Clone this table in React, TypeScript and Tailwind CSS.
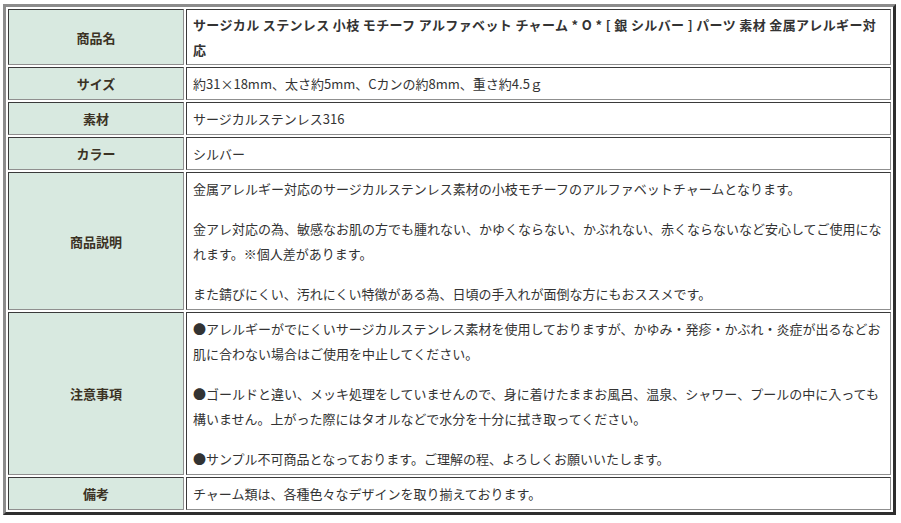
const font = "font-['Noto_Sans_CJK_JP','Noto_Sans',sans-serif]";

interface Row {
  label: string;
  body: string[][];
  bold?: boolean;
}

const rows: Row[] = [
  {
    label: '商品名',
    bold: true,
    body: [
      [
        'サージカル ステンレス 小枝 モチーフ アルファベット チャーム * O * [ 銀 シルバー ] パーツ 素材 金属アレルギー対',
        '応',
      ],
    ],
  },
  { label: 'サイズ', body: [['約31×18mm、太さ約5mm、Cカンの約8mm、重さ約4.5ｇ']] },
  { label: '素材', body: [['サージカルステンレス316']] },
  { label: 'カラー', body: [['シルバー']] },
  {
    label: '商品説明',
    body: [
      ['金属アレルギー対応のサージカルステンレス素材の小枝モチーフのアルファベットチャームとなります。'],
      [
        '金アレ対応の為、敏感なお肌の方でも腫れない、かゆくならない、かぶれない、赤くならないなど安心してご使用にな',
        'れます。※個人差があります。',
      ],
      ['また錆びにくい、汚れにくい特徴がある為、日頃の手入れが面倒な方にもおススメです。'],
    ],
  },
  {
    label: '注意事項',
    body: [
      [
        '●アレルギーがでにくいサージカルステンレス素材を使用しておりますが、かゆみ・発疹・かぶれ・炎症が出るなどお',
        '肌に合わない場合はご使用を中止してください。',
      ],
      [
        '●ゴールドと違い、メッキ処理をしていませんので、身に着けたままお風呂、温泉、シャワー、プールの中に入っても',
        '構いません。上がった際にはタオルなどで水分を十分に拭き取ってください。',
      ],
      ['●サンプル不可商品となっております。ご理解の程、よろしくお願いいたします。'],
    ],
  },
  { label: '備考', body: [['チャーム類は、各種色々なデザインを取り揃えております。']] },
];

export default function App() {
  return (
    <div className={`min-h-[523px] bg-white pt-[4px] pl-[3px] ${font}`}>
      <table className="w-[893px] table-fixed border-separate border-spacing-[2px] border-[3px] border-solid border-t-[#8c8c8c] border-l-[#8c8c8c] border-r-[#2e2e2e] border-b-[#2e2e2e] text-[13px]">
        <colgroup>
          <col className="w-[176px]" />
          <col />
        </colgroup>
        <tbody>
          {rows.map((row) => (
            <tr key={row.label}>
              <th className="border border-solid border-t-[#3a3a3a] border-l-[#3a3a3a] border-r-[#8f8f8f] border-b-[#8f8f8f] bg-[#d8e9e0] px-[4px] py-[3px] text-center align-middle font-bold leading-[25px] text-[#3b3224]">
                {row.label}
              </th>
              <td
                className={`border border-solid border-t-[#3a3a3a] border-l-[#3a3a3a] border-r-[#8f8f8f] border-b-[#8f8f8f] bg-white pl-[6px] pr-[3px] text-left align-middle text-[#333] ${
                  row.bold
                    ? 'py-[2px] font-bold leading-[25px] tracking-[0.35px] text-[#2a2418]'
                    : 'py-[3px] leading-[25px]'
                }`}
              >
                {row.body.map((para, i) => (
                  <p key={i} className={i > 0 ? 'mt-[15px]' : ''}>
                    {para.map((line, j) => (
                      <span key={j} className="block whitespace-nowrap">
                        {line}
                      </span>
                    ))}
                  </p>
                ))}
              </td>
            </tr>
          ))}
        </tbody>
      </table>
    </div>
  );
}
